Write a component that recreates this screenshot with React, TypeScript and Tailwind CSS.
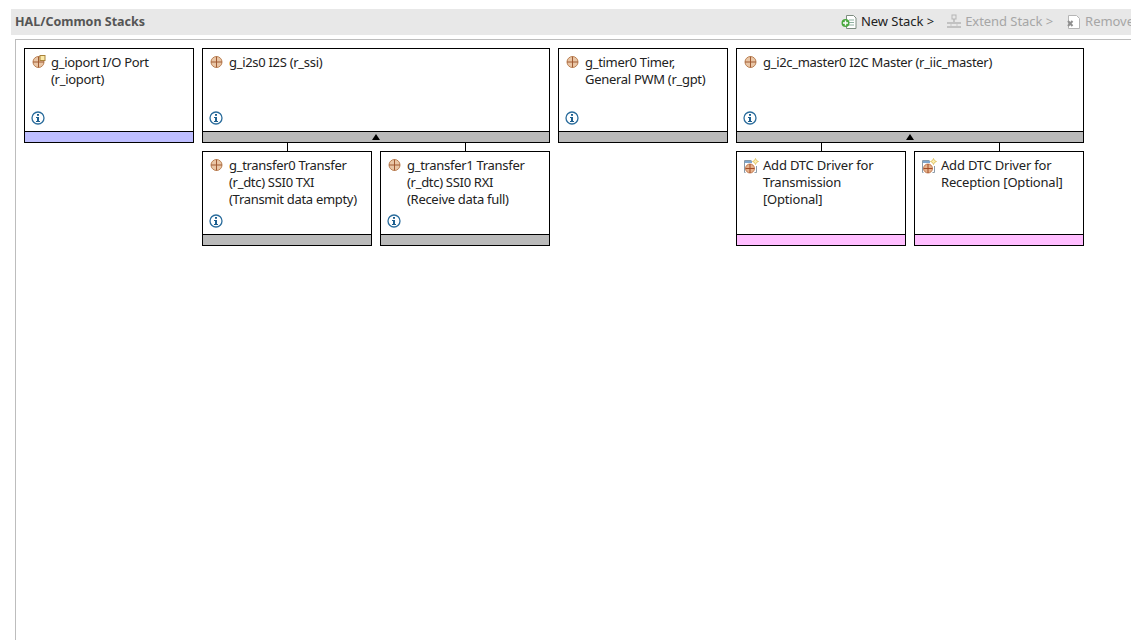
import type { ReactNode } from 'react'

type Kind = 'module' | 'port' | 'add'

interface CardData {
  title: string[]
  kind: Kind
  info?: boolean
  footer: 'gray' | 'blue' | 'pink'
}

interface StackData {
  root: CardData
  children?: CardData[]
}

const stacks: StackData[] = [
  { root: { title: ['g_ioport I/O Port', '(r_ioport)'], kind: 'port', info: true, footer: 'blue' } },
  {
    root: { title: ['g_i2s0 I2S (r_ssi)'], kind: 'module', info: true, footer: 'gray' },
    children: [
      { title: ['g_transfer0 Transfer', '(r_dtc) SSI0 TXI', '(Transmit data empty)'], kind: 'module', info: true, footer: 'gray' },
      { title: ['g_transfer1 Transfer', '(r_dtc) SSI0 RXI', '(Receive data full)'], kind: 'module', info: true, footer: 'gray' }
    ]
  },
  { root: { title: ['g_timer0 Timer,', 'General PWM (r_gpt)'], kind: 'module', info: true, footer: 'gray' } },
  {
    root: { title: ['g_i2c_master0 I2C Master (r_iic_master)'], kind: 'module', info: true, footer: 'gray' },
    children: [
      { title: ['Add DTC Driver for', 'Transmission', '[Optional]'], kind: 'add', footer: 'pink' },
      { title: ['Add DTC Driver for', 'Reception [Optional]'], kind: 'add', footer: 'pink' }
    ]
  }
]

const footerColors = {
  gray: 'bg-[#bababa]',
  blue: 'bg-[#bebeff]',
  pink: 'bg-[#ffbeff]'
}

function ModuleIcon({ kind }: { kind: Kind }) {
  if (kind === 'add') {
    return (
      <svg width="16" height="16" viewBox="0 0 16 16" className="shrink-0">
        <path d="M1.5 2.5h7M13.5 8v6.5h-2M1.5 2.5v12h1" fill="none" stroke="#8a9aa8" />
        <rect x="2" y="3" width="7" height="2" fill="#7fa6cc" />
        <circle cx="7" cy="10.5" r="4.5" fill="#e6b28c" stroke="#b5683c" strokeWidth="0.8" />
        <path d="M7 6v9M2.5 10.5h9" stroke="#a34c26" strokeWidth="1" />
        <path d="M12.5 0.5l1 2 2 1-2 1-1 2-1-2-2-1 2-1z" fill="#fbeeb0" stroke="#d8b84a" strokeWidth="0.7" />
      </svg>
    )
  }
  return (
    <svg width="14" height="14" viewBox="0 0 14 14" className="shrink-0">
      <circle cx="6.5" cy="7" r="5.5" fill="#e9c6a6" stroke="#bb8154" strokeWidth="1" />
      <path d="M6.5 1.5v11M1 7h11" stroke="#a05a32" strokeWidth="1" />
      {kind === 'port' && <rect x="8" y="0.5" width="5" height="5" fill="#fbe9a8" stroke="#a8823a" strokeWidth="1" />}
    </svg>
  )
}

function InfoIcon() {
  return (
    <svg width="14" height="14" viewBox="0 0 14 14">
      <circle cx="7" cy="7" r="6" fill="#fff" stroke="#2a6c9c" strokeWidth="1.3" />
      <rect x="6" y="3" width="2" height="1.8" fill="#1d5f8f" />
      <path d="M5 6h3v4h1v1H5v-1h1V7H5z" fill="#1d5f8f" />
    </svg>
  )
}

function Card({ data, expandable }: { data: CardData; expandable?: boolean }) {
  const isAdd = data.kind === 'add'
  return (
    <div className="h-[95px] flex flex-col border border-black bg-white">
      <div className="flex-1 relative flex items-start gap-[5px] pl-[7px] pt-[5px]">
        <div className={isAdd ? 'mt-px -ml-px -mr-px' : 'mt-px'}>
          <ModuleIcon kind={data.kind} />
        </div>
        <div className={`text-[13px] leading-[17px] text-[#222] ${isAdd ? 'tracking-[-0.2px]' : 'tracking-[-0.3px]'}`}>
          {data.title.map(line => <div key={line} className="whitespace-nowrap">{line}</div>)}
        </div>
        {data.info && (
          <div className="absolute left-[6px] bottom-[6px] flex"><InfoIcon /></div>
        )}
      </div>
      <div className={`h-[11px] border-t border-black flex items-center justify-center ${footerColors[data.footer]}`}>
        {expandable && <div className="w-0 h-0 border-x-[4px] border-x-transparent border-b-[6px] border-b-black" />}
      </div>
    </div>
  )
}

function Stack({ stack }: { stack: StackData }) {
  const kids = stack.children
  return (
    <div className="flex flex-col">
      <Card data={stack.root} expandable={!!kids} />
      {kids && (
        <div className="flex gap-2">
          {kids.map(kid => (
            <div key={kid.title[0] + kid.title[1]} className="w-[170px] flex flex-col">
              <div className="h-2 w-px bg-black self-center" />
              <Card data={kid} />
            </div>
          ))}
        </div>
      )}
    </div>
  )
}

function ToolItem({ icon, children, disabled }: { icon: ReactNode; children: ReactNode; disabled?: boolean }) {
  return (
    <div className={`flex items-center gap-[3px] shrink-0 whitespace-nowrap tracking-[-0.05px] ${disabled ? 'text-[#a6a6a6]' : 'text-[#222]'}`}>
      {icon}
      {children}
    </div>
  )
}

export default function App() {
  return (
    <div className="h-[640px] w-[1131px] overflow-hidden bg-white pl-[11px] pt-[9px] font-['Noto_Sans','Open_Sans',sans-serif]">
      <div className="h-[26px] bg-[#e8e8e8] flex items-center pl-1">
        <h1 className="flex-1 text-[12.5px] font-bold text-[#555]">HAL/Common Stacks</h1>
        <div className="w-[290px] shrink-0 overflow-hidden flex items-center text-[13px]">
          <ToolItem icon={
            <svg width="17" height="16" viewBox="0 0 17 16">
              <path d="M5.5 1.5h7l2.5 2.5v10.5h-9.5z" fill="#fff" stroke="#7d8c80" />
              <path d="M8 6h5M8 8.5h5M8 11h5" stroke="#8fb0a0" />
              <circle cx="4.5" cy="9" r="4" fill="#49a83e" />
              <path d="M4.5 6.5v5M2 9h5" stroke="#fff" strokeWidth="1.4" />
            </svg>
          }>New Stack &gt;</ToolItem>
          <div className="w-[12px] shrink-0" />
          <ToolItem disabled icon={
            <svg width="16" height="16" viewBox="0 0 16 16">
              <rect x="6" y="1" width="4" height="4" fill="none" stroke="#b5b5b5" />
              <path d="M8 5v3M1 9h14M1 13h14" stroke="#b5b5b5" strokeWidth="1.4" />
              <path d="M4 11h2M10 11h2" stroke="#c8c8c8" />
            </svg>
          }>Extend Stack &gt;</ToolItem>
          <div className="w-[13px] shrink-0" />
          <ToolItem disabled icon={
            <svg width="16" height="16" viewBox="0 0 16 16">
              <path d="M2.5 1.5h8l3 3v10h-11z" fill="#fff" stroke="#b5b5b5" />
              <path d="M2 7l4.5 5M6.5 7l-4.5 5" stroke="#8f8f8f" strokeWidth="2" />
            </svg>
          }>Remove</ToolItem>
        </div>
      </div>
      <div className="ml-1 mt-1 h-full border-l border-t border-[#bdbdbd] pl-2 pt-2">
        <div className="flex items-start gap-2">
          <div className="w-[170px]"><Stack stack={stacks[0]} /></div>
          <div className="w-[348px]"><Stack stack={stacks[1]} /></div>
          <div className="w-[170px]"><Stack stack={stacks[2]} /></div>
          <div className="w-[348px]"><Stack stack={stacks[3]} /></div>
        </div>
      </div>
    </div>
  )
}
